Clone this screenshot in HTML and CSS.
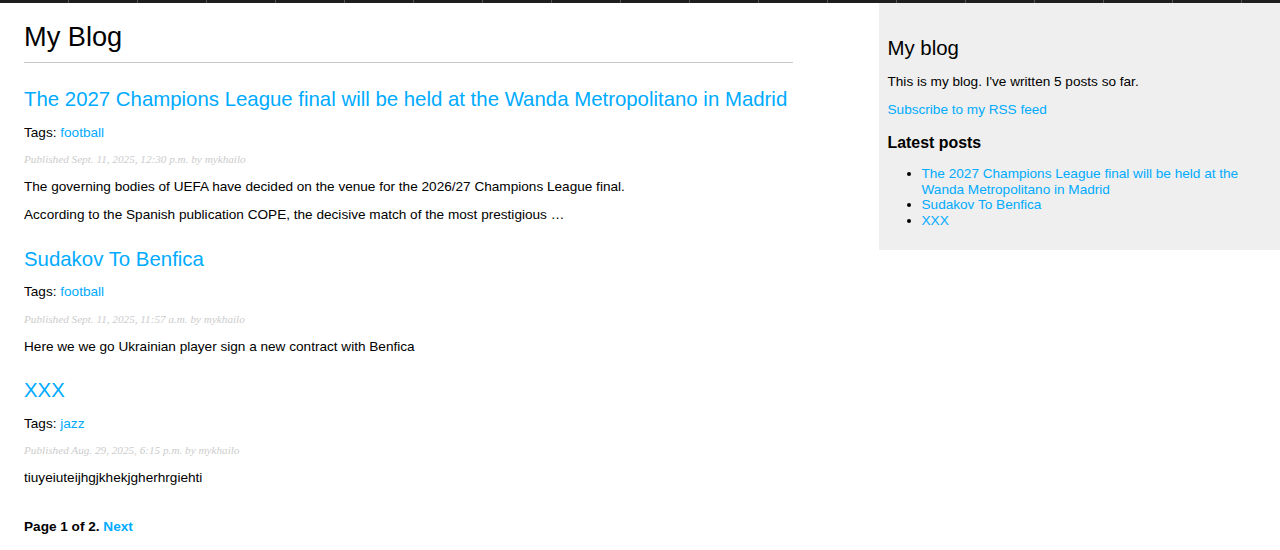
FILE: index.html
```html
<!DOCTYPE html>
<html>
<head>
<meta charset="utf-8">
<title>My Blog</title>
<link rel="stylesheet" href="styles.css">
</head>
<body>
<div class="topbar">
  <span></span><span></span><span></span><span></span><span></span><span></span>
  <span></span><span></span><span></span><span></span><span></span><span></span>
  <span></span><span></span><span></span><span></span><span></span><span></span>
  <span></span>
</div>
<div class="layout">
  <div id="content">
    <h1>My Blog</h1>
    <div class="post">
      <h2><a href="#">The 2027 Champions League final will be held at the Wanda Metropolitano in Madrid</a></h2>
      <p class="tags">Tags: <a href="#">football</a></p>
      <p class="date">Published Sept. 11, 2025, 12:30 p.m. by mykhailo</p>
      <p>The governing bodies of UEFA have decided on the venue for the 2026/27 Champions League final.</p>
      <p>According to the Spanish publication COPE, the decisive match of the most prestigious …</p>
    </div>
    <div class="post">
      <h2><a href="#">Sudakov To Benfica</a></h2>
      <p class="tags">Tags: <a href="#">football</a></p>
      <p class="date">Published Sept. 11, 2025, 11:57 a.m. by mykhailo</p>
      <p>Here we we go Ukrainian player sign a new contract with Benfica</p>
    </div>
    <div class="post">
      <h2><a href="#">XXX</a></h2>
      <p class="tags">Tags: <a href="#">jazz</a></p>
      <p class="date">Published Aug. 29, 2025, 6:15 p.m. by mykhailo</p>
      <p>tiuyeiuteijhgjkhekjgherhrgiehti</p>
    </div>
    <div class="pagination">
      <span class="current">Page 1 of 2.</span> <a href="#">Next</a>
    </div>
  </div>
  <div id="sidebar">
    <h2>My blog</h2>
    <p>This is my blog. I've written 5 posts so far.</p>
    <p><a href="#">Subscribe to my RSS feed</a></p>
    <h3>Latest posts</h3>
    <ul>
      <li><a href="#">The 2027 Champions League final will be held at the Wanda Metropolitano in Madrid</a></li>
      <li><a href="#">Sudakov To Benfica</a></li>
      <li><a href="#">XXX</a></li>
    </ul>
  </div>
</div>
</body>
</html>
```
FILE: styles.css
```css
html, body {
  margin: 0;
  padding: 0;
  background: #fff;
}
body {
  font-family: "Liberation Sans", Arial, Helvetica, sans-serif;
  font-size: 13.6px;
  color: #000;
}
a {
  color: #00abff;
  text-decoration: none;
}
.topbar {
  display: flex;
  height: 3px;
  background: #1e1e1e;
  overflow: hidden;
}
.topbar span {
  flex: none;
  width: 68px;
  border-right: 1px solid #555;
}
.layout {
  display: flex;
  justify-content: space-between;
  align-items: flex-start;
}
#content {
  width: 769px;
  padding-left: 24px;
}
h1 {
  font-size: 27.2px;
  font-weight: normal;
  margin: 18px 0;
  padding: 0 0 8.5px 0;
  border-bottom: 1px solid #c8c8c8;
}
h2 {
  font-size: 20.4px;
  font-weight: normal;
  margin: 25.5px 0 0;
}
p {
  margin: 13.6px 0;
}
p.date {
  color: #ccc;
  font-family: "Liberation Serif", Georgia, serif;
  font-size: 11.2px;
  font-style: italic;
}
.pagination {
  margin: 34px 0;
  font-weight: bold;
}
#sidebar {
  width: 384px;
  padding: 8.5px;
  background: #efefef;
}
#sidebar h3 {
  font-size: 15.9px;
  margin: 16.5px 0 14.6px;
}
#sidebar ul {
  margin: 14.6px 0 13.6px;
  padding-left: 34px;
  line-height: 15.4px;
}
```
